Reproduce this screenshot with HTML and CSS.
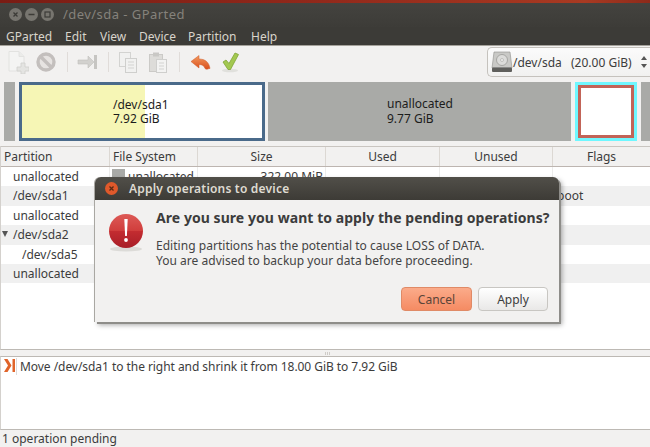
FILE: index.html
```html
<!DOCTYPE html>
<html lang="en">
<head>
<meta charset="utf-8">
<title>/dev/sda - GParted</title>
<link rel="stylesheet" href="styles.css">
</head>
<body>
<div class="app">
  <div class="desktop-strip"></div>
  <header class="titlebar">
    <div class="win-buttons">
      <span class="win-btn"><svg viewBox="0 0 13 13" width="13" height="13"><path d="M4.500 4.500l4 4M8.500 4.500l-4 4" stroke="#3c3b37" stroke-width="1.300"/></svg></span>
      <span class="win-btn"><svg viewBox="0 0 13 13" width="13" height="13"><path d="M3.500 6.500h6" stroke="#3c3b37" stroke-width="1.500"/></svg></span>
      <span class="win-btn"><svg viewBox="0 0 13 13" width="13" height="13"><rect x="4" y="4" width="5" height="5" fill="none" stroke="#3c3b37" stroke-width="1.200"/></svg></span>
    </div>
    <span class="win-title">/dev/sda - GParted</span>
  </header>
  <nav class="menubar">
    <span class="menu-item m-gparted">GParted</span>
    <span class="menu-item m-edit">Edit</span>
    <span class="menu-item m-view">View</span>
    <span class="menu-item m-device">Device</span>
    <span class="menu-item m-partition">Partition</span>
    <span class="menu-item">Help</span>
  </nav>
  <div class="toolbar">
    <div class="tool-group first">
      <svg class="tool" viewBox="0 0 24 24"><path d="M4 1.500h10l5 5V21H4z" fill="#f4f4f3" stroke="#e2e2e0"/><path d="M14 1.500v5h5" fill="#ebebe9" stroke="#e2e2e0"/><path d="M16 13h4v4h4v4h-4v3h-4v-3h-4v-4h4z" fill="#e4e4e2" stroke="#cfcfcd" stroke-width=".8"/></svg>
      <svg class="tool" viewBox="0 0 24 24"><circle cx="12" cy="12" r="8" fill="#e6e3e1" stroke="#c3bfbd" stroke-width="3.400"/><path d="M6.500 6.500l11 11" stroke="#c3bfbd" stroke-width="3.400"/></svg>
    </div>
    <span class="tool-sep"></span>
    <div class="tool-group">
      <svg class="tool" viewBox="0 0 24 24"><path d="M3 10h10V6l6 6-6 6v-4H3z" fill="#d2d1ce" stroke="#c0bfbc" stroke-width=".6"/><rect x="19" y="5" width="3" height="14" fill="#c6c5c2"/></svg>
    </div>
    <span class="tool-sep"></span>
    <div class="tool-group">
      <svg class="tool" viewBox="0 0 24 24"><rect x="3.500" y="2.500" width="11" height="14" fill="#f1f1f0" stroke="#d3d3d1"/><rect x="9.500" y="8.500" width="11" height="14" fill="#f1f1f0" stroke="#cfcfcd"/><path d="M12 12h6M12 15h6M12 18h6" stroke="#d3d3d1"/></svg>
      <svg class="tool" viewBox="0 0 24 24"><rect x="3.500" y="4.500" width="13" height="17" fill="#dddcd9" stroke="#cbcac7"/><rect x="7" y="2.500" width="6" height="4" fill="#c9c8c5"/><rect x="10.500" y="9.500" width="10" height="13" fill="#f3f3f2" stroke="#cfcfcd"/><path d="M13 13h5M13 16h5M13 19h5" stroke="#d3d3d1"/></svg>
    </div>
    <span class="tool-sep last"></span>
    <div class="tool-group">
      <svg class="tool" viewBox="0 0 24 24">
        <defs><linearGradient id="ug" x1="0" y1="0" x2="0" y2="1"><stop offset="0" stop-color="#f39a5e"/><stop offset="1" stop-color="#d94f1c"/></linearGradient></defs>
        <path d="M3 11.500L11 5.500v3.500c6 0 10 3 11 9.500h-1c-1.500 1-3 1-4 0-1-3-3-4-6-4V18z" fill="url(#ug)" stroke="#cf5a28" stroke-width=".5"/>
      </svg>
      <svg class="tool" viewBox="0 0 24 24"><ellipse cx="12" cy="20.500" rx="8" ry="1.800" fill="#e0e0dc"/><path d="M5 12l3-2 3 3.500 6-10.500 3.500 1.500-8 15h-2.500z" fill="#a3c850" stroke="#7fa434" stroke-width=".8"/></svg>
    </div>
    <div class="combo">
      <svg class="disk" viewBox="0 0 22 22"><path d="M3 1h16l2 16H1z" fill="#c9c9c6" stroke="#8f8f8c" stroke-width=".6"/><rect x="1" y="16.500" width="20" height="4.500" rx="1" fill="#5f5f5c"/><circle cx="11" cy="9" r="5.500" fill="#dcdcda" stroke="#a6a6a3"/><circle cx="11" cy="9" r="1.500" fill="#efefee" stroke="#a6a6a3" stroke-width=".6"/></svg>
      <span class="combo-name">/dev/sda</span>
      <span class="combo-size">(20.00 GiB)</span>
      <svg class="combo-arrows" viewBox="0 0 8 16"><path d="M4 2l3 4H1zM4 14l3-4H1z" fill="#555"/></svg>
    </div>
  </div>
  <section class="graph">
    <div class="seg gray edge-l"></div>
    <div class="seg sda1">
      <div class="used"></div>
      <div class="seg-label">/dev/sda1<br>7.92 GiB</div>
    </div>
    <div class="seg gray mid"><div class="seg-label">unallocated<br>9.77 GiB</div></div>
    <div class="seg selected"><div class="inner"></div></div>
    <div class="seg gray edge-r"></div>
  </section>
  <section class="tree">
    <div class="row head">
      <span class="c">Partition</span><span class="c">File System</span><span class="c mid-h">Size</span><span class="c mid-h">Used</span><span class="c mid-h">Unused</span><span class="c mid-h">Flags</span>
    </div>
    <div class="row"><span class="c name">unallocated</span><span class="c fs"><i class="swatch"></i>unallocated</span><span class="c num">322.00 MiB</span><span class="c"></span><span class="c"></span><span class="c"></span></div>
    <div class="row alt"><span class="c name">/dev/sda1</span><span class="c"></span><span class="c"></span><span class="c"></span><span class="c"></span><span class="c flag">boot</span></div>
    <div class="row"><span class="c name">unallocated</span><span class="c"></span><span class="c"></span><span class="c"></span><span class="c"></span><span class="c"></span></div>
    <div class="row alt"><span class="c name"><i class="expander"></i>/dev/sda2</span><span class="c"></span><span class="c"></span><span class="c"></span><span class="c"></span><span class="c"></span></div>
    <div class="row"><span class="c name sub">/dev/sda5</span><span class="c"></span><span class="c"></span><span class="c"></span><span class="c"></span><span class="c"></span></div>
    <div class="row alt"><span class="c name">unallocated</span><span class="c"></span><span class="c"></span><span class="c"></span><span class="c"></span><span class="c"></span></div>
  </section>
  <div class="pane-handle"><i class="grip-dot"></i><i class="grip-dot"></i><i class="grip-dot"></i></div>
  <section class="ops">
    <svg class="op-icon" viewBox="0 0 12 13"><path d="M0 0h3.500l4 6.500-4 6.500H0l4-6.500z" fill="#e0642a"/><rect x="8.500" y="0" width="2.500" height="13" fill="#e0642a"/></svg>
    <span class="op-text">Move /dev/sda1 to the right and shrink it from 18.00 GiB to 7.92 GiB</span>
  </section>
  <footer class="status">1 operation pending</footer>
</div>

<div class="dialog">
  <div class="dlg-title">
    <span class="dlg-close"><svg viewBox="0 0 13 13" width="13" height="13"><path d="M4.500 4.500l4 4M8.500 4.500l-4 4" stroke="#5a2a14" stroke-width="1.300"/></svg></span>
    <span class="dlg-title-text">Apply operations to device</span>
  </div>
  <div class="dlg-body">
    <svg class="err" viewBox="0 0 36 40">
      <defs>
        <linearGradient id="eg" x1="0" y1="0" x2="0" y2="1"><stop offset="0" stop-color="#dd5a56"/><stop offset=".5" stop-color="#d03d3c"/><stop offset=".51" stop-color="#c32c30"/><stop offset="1" stop-color="#a81e28"/></linearGradient>
      </defs>
      <ellipse cx="18" cy="36" rx="16" ry="2.500" fill="#dcdbd8"/>
      <circle cx="18" cy="18" r="17" fill="url(#eg)"/>
      <path d="M16.300 6h3.400l-.8 17h-1.800z" fill="#fff"/>
      <circle cx="18" cy="27" r="1.900" fill="#fff"/>
    </svg>
    <div class="dlg-text">
      <h1 class="dlg-heading">Are you sure you want to apply the pending operations?</h1>
      <p class="dlg-msg">Editing partitions has the potential to cause LOSS of DATA.<br>You are advised to backup your data before proceeding.</p>
    </div>
  </div>
  <div class="dlg-actions">
    <button class="btn cancel">Cancel</button>
    <button class="btn">Apply</button>
  </div>
</div>
</body>
</html>
```

FILE: styles.css
```css
* { box-sizing: border-box; }
html, body { margin: 0; padding: 0; }
body {
  width: 650px;
  height: 447px;
  overflow: hidden;
  position: relative;
  font-family: "Noto Sans", "Open Sans", sans-serif;
  font-size: 12px;
  color: #3c3c3c;
  background: #f2f1f0;
}
.app { display: flex; flex-direction: column; height: 447px; }

.desktop-strip { height: 3px; background: linear-gradient(90deg, #7a1c14, #92291b 50%, #a83a22 90%, #8d2a1a); flex: none; }
.titlebar {
  height: 24px; flex: none; display: flex; align-items: center; padding-bottom: 2px;
  background: linear-gradient(#44433f, #3d3c38);
}
.win-buttons { display: flex; gap: 3px; padding-left: 9px; width: 63px; }
.win-btn {
  width: 13px; height: 13px; border-radius: 50%;
  background: #77756f; display: block;
}
.win-btn svg { display: block; }
.win-title { font-size: 13px; color: #85827b; letter-spacing: .45px; }

.menubar {
  height: 18px; flex: none; display: flex; align-items: center; padding-left: 6px;
  background: #3c3b37; color: #d8d4cb; font-size: 12px;
}
.menu-item { flex: none; }
.m-gparted { width: 59px; }
.m-edit { width: 35px; }
.m-view { width: 39px; }
.m-device { width: 49px; }
.m-partition { width: 63px; }

.toolbar {
  height: 36px; flex: none; display: flex; align-items: center; padding: 0 0 3px 5px;
  background: #f2f1f0; border-top: 1px solid #a5a29b;
}
.tool-group { display: flex; gap: 6px; }
.tool-group.first { gap: 5px; }
.tool { width: 24px; height: 24px; display: block; }
.tool-sep { width: 1px; height: 20px; background: #e0dcd9; margin: 0 7px 0 9px; }
.tool-sep.last { margin-right: 8px; }
.combo {
  margin-left: auto; width: 163px; height: 30px;
  display: flex; align-items: center; padding-left: 3px;
  background: linear-gradient(#fbfbfb, #f1f1f0); border: 1px solid #c5c2bd; border-right: 0;
  border-radius: 5px 0 0 5px; color: #3c3c3c; font-size: 12px;
}
.disk { width: 22px; height: 22px; flex: none; }
.combo-name { width: 58px; }
.combo-size { flex: none; }
.combo-arrows { width: 8px; height: 16px; margin-left: 8px; }

.graph {
  height: 65px; flex: none; display: flex; padding: 1px 0 5px 4px;
  background: #f2f1f0;
}
.seg { height: 59px; flex: none; }
.gray { background: #a9aaa7; }
.edge-l { width: 11px; margin-right: 4px; }
.mid { width: 303px; margin: 0 4px 0 3px; display: flex; align-items: center; padding-left: 119px; }
.edge-r { width: 9px; margin-left: 4px; }
.sda1 { width: 246px; border: 3px solid #4a6a8a; background: #fff; position: relative; display: flex; align-items: center; }
.used { width: 123px; height: 100%; background: #f6f6b5; flex: none; }
.sda1 .seg-label { position: absolute; left: 91px; top: 50%; transform: translateY(-50%); }
.seg-label { color: #1c1c1c; line-height: 14.5px; font-size: 12px; white-space: nowrap; }
.selected { width: 62px; border: 3px solid #6ff7ff; }
.inner { height: 100%; background: #fff; border: 3px solid #c26458; }

.tree {
  height: 204px; flex: none; background: #fff; border-bottom: 1px solid #bdb9b4; border-left: 1px solid #d4d1cd;
}
.row {
  display: grid;
  grid-template-columns: 109px 88px 128px 114px 113px 1fr;
  height: 19.400px; align-items: center; white-space: nowrap;
}
.row .c { height: 100%; line-height: 19px; border-right: 1px solid #ececeb; }
.row .c:last-child { border-right: 0; }
.alt { background: #f0f0f0; }
.head {
  height: 21px; background: #f2f1f0;
  border-top: 1px solid #c9c5c0; border-bottom: 1px solid #bdb5b0;
}
.row.head .c { border-right: 1px solid #dcd8d3; display: flex; align-items: center; padding-left: 3px; }
.row.head .mid-h { justify-content: center; padding-left: 0; }
.row.head .c:last-child { border-right: 0; }
.c { display: block; min-width: 0; overflow: hidden; }
.row .name { padding-left: 12px; position: relative; overflow: visible; }
.row .sub { padding-left: 21px; }
.expander {
  position: absolute; left: 1px; top: 6px; width: 0; height: 0;
  border-left: 3.500px solid transparent; border-right: 3.500px solid transparent; border-top: 6px solid #555;
}
.row .fs { padding-left: 2px; display: flex; align-items: center; gap: 3px; }
.swatch { width: 13px; height: 15px; background: #a9aaa7; display: block; flex: none; }
.num { text-align: right; padding-right: 2px; }
.flag { padding-left: 4px; }

.pane-handle { height: 6px; flex: none; background: #f2f1f0; display: flex; justify-content: center; align-items: center; gap: 1px; padding-left: 5px; }
.grip-dot { width: 1px; height: 3px; background: #cfccc8; display: block; }
.ops {
  height: 74px; flex: none; background: #fff; display: flex; align-items: flex-start;
  border-top: 1px solid #bdb9b4; border-bottom: 1px solid #bdb9b4; border-left: 1px solid #d4d1cd;
  padding: 1px 0 0 3px;
}
.op-icon { width: 12px; height: 13px; flex: none; margin-top: 1px; }
.op-text { padding-left: 3px; line-height: 17px; letter-spacing: -.05px; border-left: 1px solid #dcdcdc; height: 17px; }
.status { flex: 1; padding-left: 2px; line-height: 17px; background: #f2f1f0; }

.dialog {
  position: absolute; left: 95px; top: 177px; width: 464px; height: 145px;
  background: #f2f1f0; border-radius: 6px 6px 0 0;
  box-shadow: -1px 0 0 #a9a7a2, 2px 2px 0 #8e8d89, 3px 3px 5px rgba(0,0,0,.35);
  display: flex; flex-direction: column;
}
.dlg-title {
  height: 23px; flex: none; display: flex; align-items: center; padding-left: 10px;
  background: linear-gradient(#514f49, #3d3b36); border-radius: 6px 6px 0 0;
}
.dlg-close { width: 13px; height: 13px; border-radius: 50%; background: #e0592b; display: block; flex: none; }
.dlg-close svg { display: block; }
.dlg-title-text { margin-left: 11px; color: #dfdbd2; font-size: 12px; font-weight: 600; letter-spacing: .2px; }
.dlg-body { display: flex; flex: 1; padding: 13px 0 0 13px; }
.err { width: 36px; height: 40px; flex: none; }
.dlg-text { margin-left: 12px; margin-top: -4px; }
.dlg-heading { margin: 0; font-size: 14px; font-weight: 700; line-height: 18px; color: #3c3c3c; white-space: nowrap; letter-spacing: .055px; }
.dlg-msg { margin: 12px 0 0; font-size: 12px; line-height: 14.500px; color: #444; white-space: nowrap; letter-spacing: .03px; }
.dlg-actions { display: flex; justify-content: flex-end; gap: 6px; padding: 0 11px 11px 0; flex: none; }
.btn {
  width: 70px; height: 24px; font: inherit; color: #3c3c3c; padding: 0;
  background: linear-gradient(#fff, #e9e8e7); border: 1px solid #c8c6c2; border-radius: 4px;
}
.cancel { width: 71px; background: linear-gradient(#fbab8a, #f58b63); border-color: #e08a66; color: #5a4438; }
```
